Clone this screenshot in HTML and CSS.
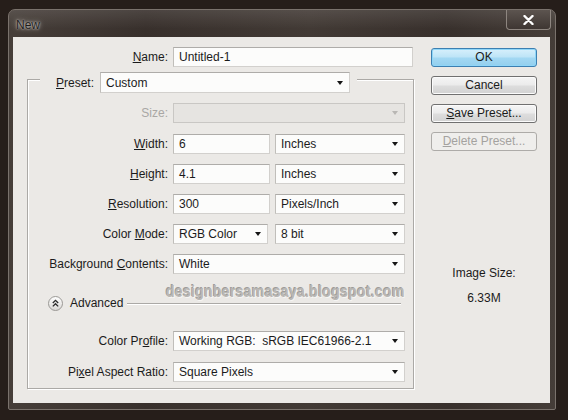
FILE: index.html
```html
<!DOCTYPE html>
<html>
<head>
<meta charset="utf-8">
<link rel="stylesheet" href="styles.css">
</head>
<body>
<div class="window">
  <div class="titlebar">
    <span class="title">New</span>
    <div class="close">
      <svg width="11" height="10" viewBox="0 0 11 10"><path d="M1.5 1 L9.5 9 M9.5 1 L1.5 9" stroke="#fff" stroke-width="2.4" stroke-linecap="round"/></svg>
    </div>
  </div>
  <div class="client">
    <div class="form">
      <div class="name-row">
        <span class="lbl"><u>N</u>ame:</span>
        <div class="field w240">Untitled-1</div>
      </div>
      <div class="group">
        <div class="preset">
          <span><u>P</u>reset:</span>
          <div class="field select w250">Custom<span class="arrow"></span></div>
        </div>
        <div class="rows">
          <div class="row size-row">
            <span class="lbl disabled">Size:</span>
            <div class="field select dis w232"><span class="arrow light"></span></div>
          </div>
          <div class="row">
            <span class="lbl"><u>W</u>idth:</span>
            <div class="field w97">6</div>
            <div class="field select w130">Inches<span class="arrow"></span></div>
          </div>
          <div class="row">
            <span class="lbl"><u>H</u>eight:</span>
            <div class="field w97">4.1</div>
            <div class="field select w130">Inches<span class="arrow"></span></div>
          </div>
          <div class="row">
            <span class="lbl"><u>R</u>esolution:</span>
            <div class="field w97">300</div>
            <div class="field select w130">Pixels/Inch<span class="arrow"></span></div>
          </div>
          <div class="row">
            <span class="lbl">Color <u>M</u>ode:</span>
            <div class="field select w95">RGB Color<span class="arrow"></span></div>
            <div class="field select w130 ml2">8 bit<span class="arrow"></span></div>
          </div>
          <div class="row">
            <span class="lbl">Background <u>C</u>ontents:</span>
            <div class="field select w232">White<span class="arrow"></span></div>
          </div>
        </div>
        <div class="adv">
          <svg class="adv-icon" width="15" height="15" viewBox="0 0 15 15">
            <defs><linearGradient id="g" x1="0" y1="0" x2="0" y2="1"><stop offset="0" stop-color="#ffffff"/><stop offset="1" stop-color="#d9d7d4"/></linearGradient></defs>
            <circle cx="7.5" cy="7.5" r="7" fill="url(#g)" stroke="#9a9895"/>
            <polyline points="4.8,7 7.5,4.3 10.2,7" fill="none" stroke="#2a2a2a" stroke-width="1.3"/>
            <polyline points="4.8,10.4 7.5,7.7 10.2,10.4" fill="none" stroke="#2a2a2a" stroke-width="1.3"/>
          </svg>
          <span class="adv-text">Advanced</span>
          <span class="adv-line"></span>
        </div>
        <div class="rows rows2">
          <div class="row">
            <span class="lbl">Color Pr<u>o</u>file:</span>
            <div class="field select w232">Working RGB:&nbsp; sRGB IEC61966-2.1<span class="arrow"></span></div>
          </div>
          <div class="row">
            <span class="lbl">Pi<u>x</u>el Aspect Ratio:</span>
            <div class="field select w232">Square Pixels<span class="arrow"></span></div>
          </div>
        </div>
        <div class="watermark">designbersamasaya.blogspot.com</div>
      </div>
    </div>
    <div class="side">
      <div class="btn ok">OK</div>
      <div class="btn">Cancel</div>
      <div class="btn"><u>S</u>ave Preset...</div>
      <div class="btn disabled-btn"><u>D</u>elete Preset...</div>
      <div class="imgsize">
        <div>Image Size:</div>
        <div class="imgval">6.33M</div>
      </div>
    </div>
  </div>
</div>
</body>
</html>
```

FILE: styles.css
```css
* { box-sizing: border-box; }

body {
  margin: 0;
  background: #261e1a;
  font-family: "Liberation Sans", Arial, sans-serif;
  font-size: 12px;
  color: #1b1b1b;
}

u { text-decoration: underline; text-underline-offset: 1px; }

.window {
  margin: 9px 0 0 8px;
  width: 548px;
  height: 401px;
  border: 1px solid #7a726c;
  border-radius: 7px 7px 2px 2px;
  background: linear-gradient(90deg, #463e39 0%, #38302c 25%, #423a35 55%, #38302c 80%, #453d38 100%);
  display: flex;
  flex-direction: column;
}

.titlebar {
  height: 27px;
  display: flex;
  justify-content: space-between;
  align-items: flex-start;
  background: linear-gradient(180deg, rgba(255,255,255,0.10), rgba(255,255,255,0) 70%);
  border-radius: 6px 6px 0 0;
}

.title {
  margin: 8px 0 0 7px;
  line-height: 14px;
  color: #1e1e1e;
  text-shadow: 0 0 5px #c9c2bc, 0 0 2px #e0dad4;
}

.close {
  width: 45px;
  height: 20px;
  margin-right: 4px;
  border: 1px solid #8e8680;
  border-top: none;
  border-radius: 0 0 4px 4px;
  background: linear-gradient(180deg, #5c544f, #3f3733);
  display: flex;
  align-items: center;
  justify-content: center;
}

.client {
  flex: 1;
  margin: 0 5px 6px 4px;
  background: #ebe9e6;
  display: flex;
}

.form {
  width: 400px;
  padding-top: 10px;
}

.name-row {
  display: flex;
  align-items: center;
  gap: 5px;
  height: 20px;
}

.name-row .lbl {
  width: 155px;
  text-align: right;
}

.field {
  height: 20px;
  background: #fcfcfb;
  border: 1px solid #d2d0cd;
  border-top-color: #aeaca9;
  border-left-color: #c0beba;
  padding: 0 6px 0 5px;
  display: flex;
  align-items: center;
  justify-content: space-between;
  white-space: nowrap;
}

.field.dis {
  background: #e6e4e1;
  border-color: #c9c7c4;
  justify-content: flex-end;
}

.arrow {
  width: 0;
  height: 0;
  border-left: 3.5px solid transparent;
  border-right: 3.5px solid transparent;
  border-top: 4px solid #151515;
  flex: none;
}

.arrow.light { border-top-color: #b9b7b4; }

.w240 { width: 240px; }
.w250 { width: 250px; height: 21px; }
.w232 { width: 232px; }
.w97 { width: 97px; }
.w130 { width: 130px; }
.w95 { width: 95px; }
.ml2 { margin-left: 2px; }

.group {
  position: relative;
  margin: 12px 0 0 14px;
  width: 387px;
  height: 310px;
  border: 1px solid #aba9a6;
  box-shadow: inset 1px 1px 0 #ffffff, 1px 1px 0 #ffffff;
}

.preset {
  display: flex;
  align-items: center;
  gap: 6px;
  width: max-content;
  margin: -8px 0 0 12px;
  padding: 0 7px 0 16px;
  background: #ebe9e6;
}

.rows {
  display: flex;
  flex-direction: column;
  gap: 10px;
  margin-top: 10px;
}

.row {
  display: flex;
  align-items: center;
  gap: 5px;
  height: 20px;
}

.row .lbl {
  width: 140px;
  text-align: right;
  white-space: nowrap;
}

.lbl.disabled { color: #a9a7a4; }

.size-row { margin-bottom: 1px; }

.adv {
  display: flex;
  align-items: center;
  height: 16px;
  margin-top: 21px;
  padding-left: 20px;
}

.adv-icon { flex: none; }

.adv-text { margin-left: 7px; }

.adv-line {
  flex: 1;
  height: 2px;
  margin: 1px 12px 0 4px;
  border-top: 1px solid #aba9a6;
  border-bottom: 1px solid #ffffff;
}

.rows2 {
  margin-top: 20px;
  gap: 11px;
}

.watermark {
  position: absolute;
  left: 138px;
  top: 203px;
  font-size: 16px;
  line-height: 17px;
  font-weight: bold;
  letter-spacing: 0.3px;
  color: #bab8b5;
  text-shadow: -1px -1px 0 #9e9c99, 1px 1px 0 #f6f5f3;
  transform: scaleX(0.88);
  transform-origin: left top;
  white-space: nowrap;
}

.side {
  width: 106px;
  margin-left: 18px;
  padding-top: 11px;
  display: flex;
  flex-direction: column;
}

.btn {
  height: 19px;
  margin-bottom: 9px;
  border: 1px solid #707070;
  border-radius: 3px;
  background: linear-gradient(180deg, #f5f5f5 0%, #ebebeb 48%, #dddddd 52%, #d2d2d2 100%);
  text-align: center;
  line-height: 17px;
  box-shadow: inset 0 0 0 1px #fbfbfb;
}

.btn.ok {
  border-color: #3c7fb1;
  background: linear-gradient(180deg, #d7f0fc 0%, #bde4f7 48%, #a3d8f3 52%, #93cfee 100%);
  box-shadow: inset 0 0 0 1px #8fd6f8;
}

.btn.disabled-btn {
  color: #a4a29f;
  border-color: #adaba8;
  background: #efeeec;
  box-shadow: none;
}

.imgsize {
  margin-top: 106px;
  text-align: center;
  line-height: 14px;
}

.imgval { margin-top: 11px; }
```
